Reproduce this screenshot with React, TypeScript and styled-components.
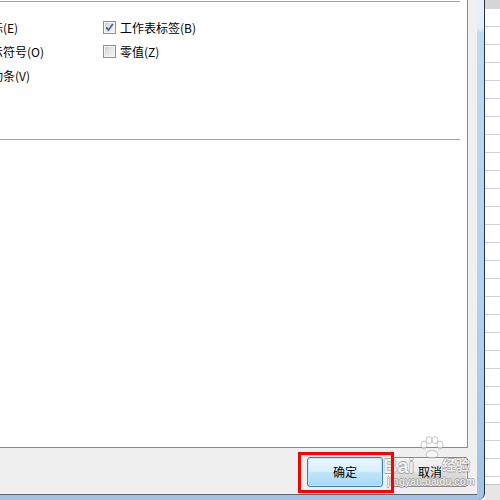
import React from "react";
import styled, { createGlobalStyle } from "styled-components";

const Global = createGlobalStyle`
  html, body { margin: 0; padding: 0; background: #ffffff; }
  body { width: 500px; height: 500px; overflow: hidden; font-family: "Noto Sans CJK SC", "Noto Sans", sans-serif; }
`;

const Screen = styled.div`
  position: relative;
  display: flex;
  width: 500px;
  height: 500px;
  overflow: hidden;
`;

const Dialog = styled.div`
  display: flex;
  flex-direction: column;
  width: 477px;
  height: 495px;
  padding: 0 7px 5px 0;
  border-right: 1px solid #28323d;
  border-bottom-right-radius: 7px;
  background: linear-gradient(to bottom, #e8f1fb 0, #e4eefa 28px, #bcd9f6 33px, #b2d2f2 60%, #a3c3e6 100%);
`;

const Client = styled.div`
  flex: 1;
  display: flex;
  flex-direction: column;
  background: #f0f0f0;
  border-bottom: 1px solid #5b6571;
`;

const Panel = styled.div`
  width: 467px;
  height: 447px;
  background: #ffffff;
  border-right: 1px solid #8b8b8b;
  border-bottom: 1px solid #8b8b8b;
  overflow: hidden;
  display: flex;
  flex-direction: column;
`;

const Rule = styled.div<{ $top: number }>`
  width: 460px;
  height: 1px;
  margin-top: ${(p) => p.$top}px;
  background: #a0a0a0;
  flex-shrink: 0;
`;

const Options = styled.div`
  display: grid;
  grid-template-columns: 165px 165px;
  grid-auto-rows: 24px;
  margin: 13px 0 0 -63px;
`;

const Option = styled.label`
  display: flex;
  align-items: center;
  gap: 4px;
  font-size: 12px;
  color: #000000;
  white-space: nowrap;
`;

const Box = styled.span`
  position: relative;
  box-sizing: border-box;
  width: 13px;
  height: 13px;
  flex-shrink: 0;
  margin-left: 1px;
  border: 1px solid #8e8f8f;
  background: linear-gradient(135deg, #c9ccd1 0%, #e4e5e7 45%, #f6f6f6 100%);
  box-shadow: inset 0 0 0 1px #f4f4f4;
  display: flex;
  align-items: center;
  justify-content: center;
`;

const Footer = styled.div`
  flex: 1;
  display: flex;
  align-items: center;
  justify-content: flex-end;
  gap: 9px;
  padding-right: 9px;
`;

const Button = styled.button<{ $primary?: boolean }>`
  box-sizing: border-box;
  width: 76px;
  height: 30px;
  margin-top: 1px;
  border-radius: 3px;
  font-family: "Noto Sans CJK SC", sans-serif;
  font-size: 12px;
  color: #000000;
  padding: 0;
  border: 1px solid ${(p) => (p.$primary ? "#3c7fb1" : "#8a8a8a")};
  box-shadow: inset 0 0 0 1px ${(p) => (p.$primary ? "#bfe8fb" : "#f8f8f8")};
  background: ${(p) =>
    p.$primary
      ? "linear-gradient(to bottom, #eaf6fd 0%, #d9f0fc 48%, #bee6fd 52%, #a7d9f5 100%)"
      : "linear-gradient(to bottom, #f2f2f2 0%, #ebebeb 48%, #dddddd 52%, #cfcfcf 100%)"};
`;

const Sheet = styled.div`
  flex: 1;
  display: flex;
  flex-direction: column;
`;

const SheetHeader = styled.div`
  height: 9px;
  background: #d6d6d6;
  flex-shrink: 0;
`;

const SheetRows = styled.div`
  flex: 1;
  background: repeating-linear-gradient(to bottom, #ffffff 0, #ffffff 17px, #d2d2d2 17px, #d2d2d2 18px);
`;

const SheetStatus = styled.div`
  height: 15px;
  background: #e6e6e6;
  border-top: 1px solid #c4c4c4;
`;

const Highlight = styled.div`
  position: absolute;
  left: 298px;
  top: 452px;
  width: 96px;
  height: 41px;
  box-sizing: border-box;
  border: 3px solid #ff0000;
  pointer-events: none;
`;

const Watermark = styled.div`
  position: absolute;
  left: 382px;
  top: 436px;
  width: 94px;
  height: 60px;
  pointer-events: none;
  opacity: 0.8;
`;

const MarkText = styled.span<{ $x: number; $y: number; $size: number; $family: string }>`
  position: absolute;
  left: ${(p) => p.$x}px;
  top: ${(p) => p.$y}px;
  font-size: ${(p) => p.$size}px;
  font-family: ${(p) => p.$family};
  font-weight: bold;
  line-height: 1;
  white-space: nowrap;
  color: rgba(255, 255, 255, 0.9);
  text-shadow: 0.6px 0 0 rgba(120, 120, 120, 0.7), -0.6px 0 0 rgba(120, 120, 120, 0.7),
    0 0.6px 0 rgba(120, 120, 120, 0.7), 0 -0.6px 0 rgba(120, 120, 120, 0.7);
`;

const Paw = styled.svg`
  position: absolute;
  left: 34px;
  top: 0;
`;

const left = ["行号列标(E)", "分级显示符号(O)", "垂直滚动条(V)"];

const Check = ({ checked }: { checked?: boolean }) => (
  <Box>
    {checked && (
      <svg width="11" height="11" viewBox="0 0 11 11">
        <path d="M2.2 5.4 L4.4 8.2 L8.8 2" fill="none" stroke="#4b5f8e" strokeWidth="1.7" />
      </svg>
    )}
  </Box>
);

export default function App() {
  return (
    <Screen>
      <Global />
      <Dialog>
        <Client>
          <Panel>
            <Rule $top={1} />
            <Options>
              <Option>
                <Check checked />
                {left[0]}
              </Option>
              <Option>
                <Check checked />
                工作表标签(B)
              </Option>
              <Option>
                <Check checked />
                {left[1]}
              </Option>
              <Option>
                <Check />
                零值(Z)
              </Option>
              <Option>
                <Check checked />
                {left[2]}
              </Option>
            </Options>
            <Rule $top={52} />
          </Panel>
          <Footer>
            <Button $primary>确定</Button>
            <Button>取消</Button>
          </Footer>
        </Client>
      </Dialog>
      <Sheet>
        <SheetHeader />
        <SheetRows />
        <SheetStatus />
      </Sheet>
      <Watermark>
        <Paw width="30" height="24" viewBox="0 0 30 24">
          <g fill="rgba(255,255,255,0.7)" stroke="rgba(120,120,120,0.5)" strokeWidth="1">
            <ellipse cx="8" cy="9" rx="3" ry="4" />
            <ellipse cx="13" cy="4" rx="3" ry="3.5" />
            <ellipse cx="19" cy="4" rx="3" ry="3.5" />
            <ellipse cx="24" cy="9" rx="3" ry="4" />
            <path d="M10 19 C10 13 22 13 22 19 C22 23 10 23 10 19 Z" />
          </g>
        </Paw>
        <MarkText $x={1} $y={20} $size={20} $family={'"Liberation Sans", Arial, sans-serif'}>
          Bai
        </MarkText>
        <MarkText $x={60} $y={21} $size={14} $family={'"Noto Sans CJK SC", sans-serif'}>
          经验
        </MarkText>
        <MarkText $x={5} $y={41} $size={10} $family={'"Liberation Sans", Arial, sans-serif'}>
          jingyan.baidu.com
        </MarkText>
      </Watermark>
      <Highlight />
    </Screen>
  );
}
